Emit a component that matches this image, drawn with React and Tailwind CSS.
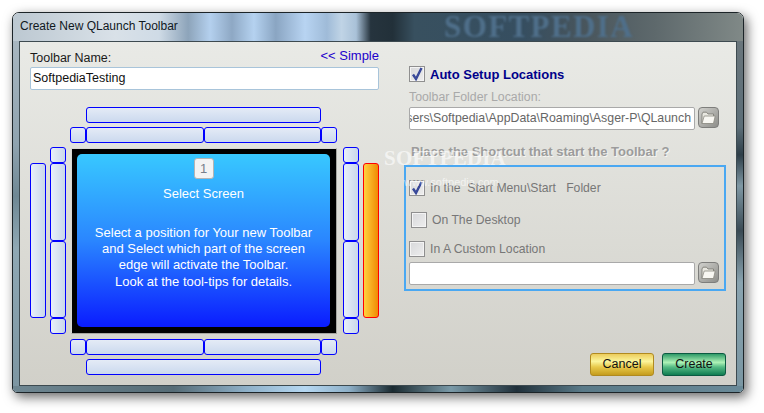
import React from "react";

// one blue picker tile on the screen-edge grid
const Tile = ({ className, vertical }) => (
  <div
    className={`rounded-[3px] border border-[#0000ff] ${
      vertical
        ? "bg-[linear-gradient(90deg,#e8eff8,#c9d7eb)]"
        : "bg-[linear-gradient(180deg,#e4ebf6,#cbd9ee)]"
    } ${className}`}
  />
);

const FolderButton = () => (
  <button className="w-[21px] h-[21px] ml-[3px] rounded-[4px] border border-[#7e7e7c] bg-[linear-gradient(135deg,#d0d0cc,#8e8e8a)] flex items-center justify-center shrink-0">
    <svg width="15" height="14" viewBox="0 0 15 14">
      <path d="M1 3 L1 12.5 L12.5 12.5 L12.5 3 L7 3 L5.5 1.2 L2 1.2 Z" fill="#e8e7e0" stroke="#77766f" strokeWidth="0.8" />
      <path d="M1 12.5 L3.2 5 L14.2 5 L12.5 12.5 Z" fill="#f8f7f2" stroke="#8b8a82" strokeWidth="0.8" />
    </svg>
  </button>
);

const Checkbox = ({ checked }) => (
  <div className="w-4 h-4 border border-[#8f8f8f] bg-[linear-gradient(135deg,#d7d8da,#eeeeee)] flex items-center justify-center shrink-0 shadow-[inset_0_0_0_1px_#f4f4f4]">
    {checked && (
      <svg width="12" height="14" viewBox="0 0 12 14">
        <path d="M2 7.5 L5 12 L10.5 1" fill="none" stroke="#3a4a9a" strokeWidth="2.4" />
      </svg>
    )}
  </div>
);

const TextBox = ({ children, className }) => (
  <div
    className={`w-[286px] h-[23px] rounded-[2px] bg-white border border-[#a9a9a9] overflow-hidden whitespace-nowrap text-[12.35px] leading-[21px] text-[#666] ${className}`}
  >
    {children}
  </div>
);

const Picker = () => (
  <div className="grid grid-cols-[16px_4px_16px_4px_16px_118px_117px_16px_6px_16px_4px_16px] grid-rows-[16px_4px_16px_4px_16px_78px_77px_16px_5px_16px_4px_16px] mt-[17px]">
    <Tile className="col-start-6 col-span-2 row-start-1" />

    <Tile className="col-start-5 row-start-3" />
    <Tile className="col-start-6 row-start-3" />
    <Tile className="col-start-7 row-start-3" />
    <Tile className="col-start-8 row-start-3" />

    <Tile vertical className="col-start-1 row-start-6 row-span-2" />
    <Tile vertical className="col-start-3 row-start-5" />
    <Tile vertical className="col-start-3 row-start-6" />
    <Tile vertical className="col-start-3 row-start-7" />
    <Tile vertical className="col-start-3 row-start-8" />

    <div className="col-start-5 col-span-4 row-start-5 row-span-4 ml-px mt-px border border-[#d8d8d4] border-b-[#a5a5a0] border-r-[#a5a5a0] bg-black pt-[5px] pb-[6px] pl-[5px] pr-[6px]">
      <div className="h-full rounded-[5px] bg-[linear-gradient(180deg,#38c8ff_0%,#2a86ff_50%,#0a1cff_100%)] flex flex-col items-center text-white text-[13px] text-center">
        <div className="mt-[4px] w-[20px] h-[21px] rounded-[3px] border border-[#b4b4b4] bg-[#f3f3f3] text-[#77808c] text-[13px] leading-[20px]">
          1
        </div>
        <div className="mt-[7px] leading-[16px]">Select Screen</div>
        <div className="mt-[23px] leading-[16.2px]">
          Select a position for Your new Toolbar
          <br />
          and Select which part of the screen
          <br />
          edge will activate the Toolbar.
          <br />
          Look at the tool-tips for details.
        </div>
      </div>
    </div>

    <Tile vertical className="col-start-10 row-start-5" />
    <Tile vertical className="col-start-10 row-start-6" />
    <Tile vertical className="col-start-10 row-start-7" />
    <Tile vertical className="col-start-10 row-start-8" />
    <div className="col-start-12 row-start-6 row-span-2 rounded-[3px] border border-[#ff0000] bg-[linear-gradient(90deg,#ffd23e,#f08a04)]" />

    <Tile className="col-start-5 row-start-10" />
    <Tile className="col-start-6 row-start-10" />
    <Tile className="col-start-7 row-start-10" />
    <Tile className="col-start-8 row-start-10" />
    <Tile className="col-start-6 col-span-2 row-start-12" />
  </div>
);

export default function App() {
  return (
    <div className="relative w-[764px] h-[413px] bg-white pl-[12px] pt-[12px] font-['Liberation_Sans',Arial,sans-serif] overflow-hidden">
      <div className="w-[732px] h-[381px] rounded-t-[7px] rounded-b-[5px] border border-[#1c2428] overflow-hidden flex flex-col shadow-[3px_4px_12px_rgba(0,0,0,0.6)]">
        {/* title bar */}
        <div className="relative h-[28px] overflow-hidden pl-[7px] text-[12px] leading-[27px] text-[#10181e] bg-[linear-gradient(90deg,#bcc8d1_0%,#d9e1e8_14%,#cfdbe6_20%,#8da4ba_24%,#b4d0ee_27%,#8ea8c4_30%,#b5d2f0_33%,#8aa5c2_36%,#b8d4f2_40%,#9fbbd8_43%,#c0d4e6_45%,#a9c1d8_47%,#26343e_49%,#223039_52%,#38505f_55%,#364e60_70%,#48555c_78%,#5e696c_88%,#808987_100%)]">
          Create New QLaunch Toolbar
          <div className="absolute left-[431px] top-[-2px] font-['Liberation_Serif',serif] font-bold text-[31px] leading-[32px] text-[#4f6f8a] tracking-[1.4px] blur-[0.8px]">
            SOFTPEDIA
          </div>
        </div>

        <div className="flex h-[345px]">
          <div className="w-[6px] bg-[linear-gradient(180deg,#a8b6c0_0%,#8fa3af_30%,#6f8894_45%,#8fa8b4_60%,#7d96a2_100%)]" />

          <div className="w-[718px] border border-[#3d4a50] bg-[linear-gradient(180deg,#e9eae6,#d1d0c9)] flex">
            {/* left column */}
            <div className="ml-[10px] w-[349px] pt-[6px]">
              <div className="flex justify-between h-[19px] text-[12.5px]">
                <span className="leading-[17px] pt-[2px] text-[#1a1a1a]">Toolbar Name:</span>
                <span className="leading-[15px] text-[13px] text-[#2200cc]">&lt;&lt; Simple</span>
              </div>
              <div className="h-[23px] rounded-[2px] bg-white border border-[#a8c4da] pl-[2px] text-[12.5px] leading-[20px] text-[#111]">
                SoftpediaTesting
              </div>
              <Picker />
            </div>

            {/* right column */}
            <div className="ml-[25px] w-[322px] pt-[24px] flex flex-col">
              <div className="flex items-center pl-[5px] h-4">
                <Checkbox checked />
                <span className="ml-[5px] pt-[1px] font-bold text-[13px] text-[#00008b]">Auto Setup Locations</span>
              </div>
              <div className="pl-[5px] mt-[6px] h-[19px] text-[12.3px] leading-[18px] text-[#a9a9a9]">
                Toolbar Folder Location:
              </div>
              <div className="flex items-start pl-[5px]">
                <TextBox className="flex justify-end pr-[3px] text-[#6e6e6e]">
                  <span>:\Users\Softpedia\AppData\Roaming\Asger-P\QLaunch</span>
                </TextBox>
                <FolderButton />
              </div>
              <div className="pl-[7px] mt-[14px] h-[16px] font-bold text-[13px] leading-[16px] text-[#9c9c9c] [text-shadow:1px_1px_0_#f5f5f2]">
                Place the Shortcut that start the Toolbar ?
              </div>
              <div className="mt-[5px] w-[322px] h-[126px] border-2 border-[#4aa8f2] pl-[3px] text-[12.2px] text-[#777]">
                <div className="flex items-center h-4 mt-[13px]">
                  <Checkbox checked />
                  <span className="ml-[5px] whitespace-pre">In the  Start Menu\Start   Folder</span>
                </div>
                <div className="flex items-center h-4 mt-[16px] ml-[2px]">
                  <Checkbox />
                  <span className="ml-[5px]">On The Desktop</span>
                </div>
                <div className="flex items-center h-4 mt-[13px]">
                  <Checkbox />
                  <span className="ml-[5px]">In A Custom Location</span>
                </div>
                <div className="flex items-start mt-[5px]">
                  <TextBox />
                  <FolderButton />
                </div>
              </div>
              <div className="mt-[62px] flex justify-end gap-[8px] text-[12.5px] text-[#111]">
                <button className="w-[64px] h-[23px] rounded-[3px] border border-[#b08a20] bg-[linear-gradient(180deg,#eccc5c_0%,#fbf59c_35%,#e8c94a_62%,#c49c1e_100%)]">
                  Cancel
                </button>
                <button className="w-[64px] h-[23px] rounded-[3px] border border-[#0c5a42] bg-[linear-gradient(180deg,#2f9a68_0%,#aef2b6_40%,#55bb84_62%,#0f7c50_100%)]">
                  Create
                </button>
              </div>
            </div>
          </div>

          <div className="w-[6px] bg-[linear-gradient(180deg,#6a767c_0%,#5c6e78_25%,#2e3e48_33%,#7f98a4_42%,#3a4a54_55%,#8aa4b0_70%,#7a96a2_100%)]" />
        </div>

        <div className="h-[6px] bg-[linear-gradient(90deg,#6f8792_0%,#566c76_22%,#8eb0c8_32%,#b6d8f2_40%,#8eb0c8_46%,#1a2a30_52%,#7a9aa8_60%,#20303a_69%,#5a7a88_78%,#6a8a98_100%)]" />
      </div>

      {/* softpedia watermark over the dialog */}
      <div className="absolute left-[384px] top-[146px] font-['Liberation_Serif',serif] font-bold text-[21px] leading-[24px] tracking-[0.2px] text-white/60 pointer-events-none">
        SOFTPEDIA
      </div>
      <div className="absolute left-[404px] top-[176px] text-[11px] leading-[13px] text-white/60 pointer-events-none">
        www.softpedia.com
      </div>
    </div>
  );
}
